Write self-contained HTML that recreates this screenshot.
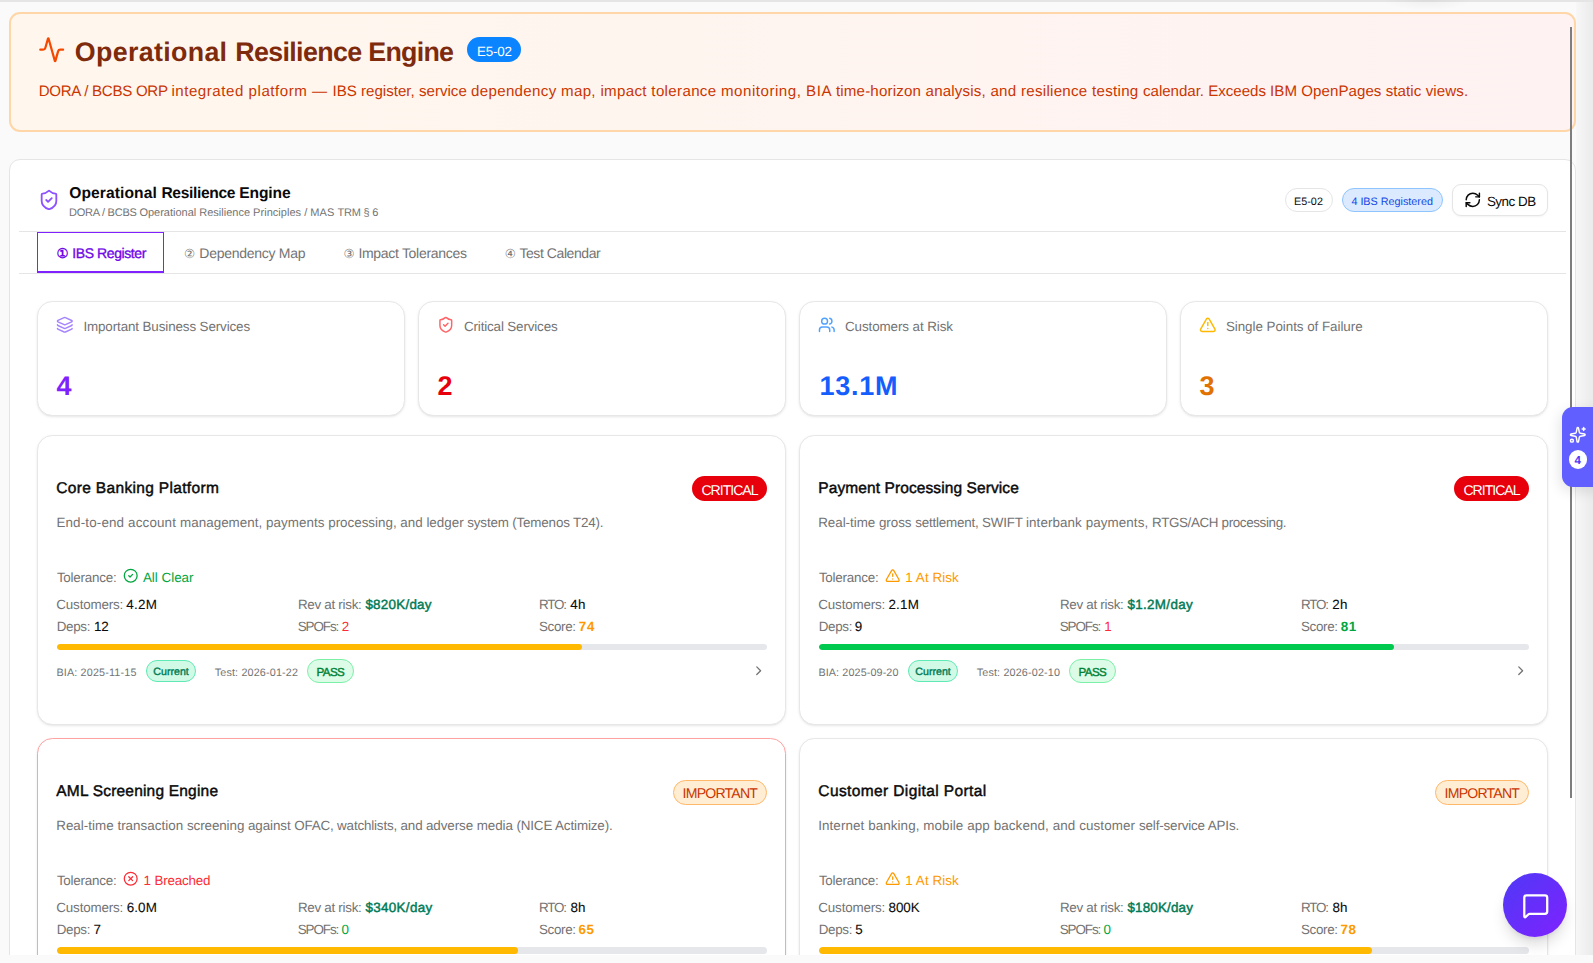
<!DOCTYPE html>
<html lang="en">
<head>
<meta charset="utf-8">
<title>Operational Resilience Engine</title>
<style>
*{box-sizing:border-box;margin:0;padding:0}
html,body{width:1593px;height:963px;overflow:hidden}
body{background:#fafafa;font-family:"Liberation Sans",sans-serif;color:#0a0a0a;position:relative;text-rendering:geometricPrecision}
.abs{position:absolute}
.t{position:absolute;white-space:nowrap;line-height:1}
svg{display:block}
.ic{position:absolute;fill:none;stroke:currentColor;stroke-linecap:round;stroke-linejoin:round;stroke-width:2;overflow:visible}
#topstrip{left:0;top:0;width:1593px;height:2px;background:#e5e5e5;z-index:50}
#viewport{left:0;top:0;width:1593px;height:955px;overflow:hidden;background:#fafafa}
#bottomstrip{left:0;top:955px;width:1593px;height:8px;background:#fafafa}
#banner{left:9px;top:12px;width:1567px;height:120px;border:2px solid #ffd6a8;border-radius:11px;background:linear-gradient(90deg,#fff7ed,#fef2f2)}
#main{left:9px;top:159px;width:1567px;height:900px;border:1px solid #e5e5e5;border-radius:11px;background:#fff}
.hr{position:absolute;height:1px;background:#e5e5e5}
.card{position:absolute;background:#fff;border:1px solid #e7e7e7;border-radius:15.4px;box-shadow:0 1px 3px rgba(0,0,0,.08),0 1px 2px -1px rgba(0,0,0,.08)}
.stat{width:368px;height:115px;top:301px}
.svc{width:749px;height:290px}
.pill{position:absolute;border-radius:999px;border:1px solid transparent}
.track{position:absolute;height:6px;width:710px;border-radius:4px;background:#e5e7eb;overflow:hidden}
.track i{display:block;height:100%;border-radius:4px}
.cn{font-family:"DejaVu Sans","Noto Sans CJK JP",sans-serif}
</style>
</head>
<body>
<div id="topstrip" class="abs"></div>
<div id="viewport" class="abs">
<div id="banner" class="abs"></div>
<svg class="ic" viewBox="0 0 24 24" style="left:37.80px;top:35.80px;width:27.4px;height:27.4px;color:#f54900;stroke-width:1.95"><path d="M22 12h-2.48a2 2 0 0 0-1.93 1.46l-2.35 8.36a.25.25 0 0 1-.48 0L9.24 2.18a.25.25 0 0 0-.48 0l-2.35 8.36A2 2 0 0 1 4.49 12H2"/></svg>
<div class="pill" style="left:467px;top:37px;width:54px;height:25px;background:#0a84ff"></div>
<div id="main" class="abs"></div>
<svg class="ic" viewBox="0 0 24 24" style="left:37.50px;top:189.30px;width:22px;height:22px;color:#8e51ff;stroke-width:2"><path d="M20 13c0 5-3.5 7.5-7.66 8.95a1 1 0 0 1-.67-.01C7.5 20.5 4 18 4 13V6a1 1 0 0 1 1-1c2 0 4.5-1.2 6.24-2.72a1.17 1.17 0 0 1 1.52 0C14.51 3.81 17 5 19 5a1 1 0 0 1 1 1z"/><path d="m9 12 2 2 4-4"/></svg>
<div class="pill" style="left:1285px;top:188px;width:48px;height:24px;border-color:#e5e5e5;background:#fff"></div>
<div class="pill" style="left:1342px;top:188px;width:101px;height:24px;border-color:#8ec5ff;background:#dbeafe"></div>
<div class="abs" style="left:1452px;top:184px;width:96px;height:32px;border:1px solid #e5e5e5;border-radius:9px;background:#fff;box-shadow:0 1px 2px rgba(0,0,0,.05)"></div>
<svg class="ic" viewBox="0 0 24 24" style="left:1464.20px;top:191.00px;width:17.6px;height:17.6px;color:#0a0a0a;stroke-width:2"><path d="M3 12a9 9 0 0 1 9-9 9.75 9.75 0 0 1 6.74 2.74L21 8"/><path d="M21 3v5h-5"/><path d="M21 12a9 9 0 0 1-9 9 9.75 9.75 0 0 1-6.74-2.74L3 16"/><path d="M8 16H3v5"/></svg>
<div class="hr" style="left:19px;top:231px;width:1547px"></div>
<div class="hr" style="left:19px;top:273px;width:1547px"></div>
<div class="abs" style="left:37px;top:232px;width:127px;height:41px;border:1px solid #7f22fe;border-bottom-width:2px;background:#fff"></div>
<div class="card stat" style="left:37px"></div>
<svg class="ic" viewBox="0 0 24 24" style="left:56.20px;top:316.20px;width:17.6px;height:17.6px;color:#a684ff;stroke-width:2"><path d="M12.83 2.18a2 2 0 0 0-1.66 0L2.6 6.08a1 1 0 0 0 0 1.83l8.58 3.91a2 2 0 0 0 1.66 0l8.58-3.9a1 1 0 0 0 0-1.83z"/><path d="M2 12a1 1 0 0 0 .58.91l8.6 3.91a2 2 0 0 0 1.65 0l8.58-3.9A1 1 0 0 0 22 12"/><path d="M2 17a1 1 0 0 0 .58.91l8.6 3.91a2 2 0 0 0 1.65 0l8.58-3.9A1 1 0 0 0 22 17"/></svg>
<div class="card stat" style="left:418px"></div>
<svg class="ic" viewBox="0 0 24 24" style="left:437.20px;top:316.20px;width:17.6px;height:17.6px;color:#ff6467;stroke-width:2"><path d="M20 13c0 5-3.5 7.5-7.66 8.95a1 1 0 0 1-.67-.01C7.5 20.5 4 18 4 13V6a1 1 0 0 1 1-1c2 0 4.5-1.2 6.24-2.72a1.17 1.17 0 0 1 1.52 0C14.51 3.81 17 5 19 5a1 1 0 0 1 1 1z"/><path d="m9 12 2 2 4-4"/></svg>
<div class="card stat" style="left:799px"></div>
<svg class="ic" viewBox="0 0 24 24" style="left:818.20px;top:316.20px;width:17.6px;height:17.6px;color:#51a2ff;stroke-width:2"><path d="M16 21v-2a4 4 0 0 0-4-4H6a4 4 0 0 0-4 4v2"/><circle cx="9" cy="7" r="4"/><path d="M22 21v-2a4 4 0 0 0-3-3.87"/><path d="M16 3.13a4 4 0 0 1 0 7.75"/></svg>
<div class="card stat" style="left:1180px"></div>
<svg class="ic" viewBox="0 0 24 24" style="left:1199.20px;top:316.20px;width:17.6px;height:17.6px;color:#ffb900;stroke-width:2"><path d="m21.73 18-8-14a2 2 0 0 0-3.48 0l-8 14A2 2 0 0 0 4 21h16a2 2 0 0 0 1.73-3"/><path d="M12 9v4"/><path d="M12 17h.01"/></svg>
<div class="card svc" style="left:37px;top:435px"></div>
<svg class="ic" viewBox="0 0 24 24" style="left:123.30px;top:568.30px;width:15.4px;height:15.4px;color:#00a63e;stroke-width:2"><circle cx="12" cy="12" r="10"/><path d="m9 12 2 2 4-4"/></svg>
<div class="track" style="left:56.5px;top:644px;height:6px"><i style="width:74%;background:#ffb900"></i></div>
<div class="pill" style="left:146px;top:660px;width:50px;height:22px;background:#d0fae5;border-color:#5ee9b5"></div>
<div class="pill" style="left:307px;top:659px;width:47px;height:24px;background:#dcfce7;border-color:#7bf1a8"></div>
<svg class="ic" viewBox="0 0 24 24" style="left:751.30px;top:663.30px;width:15.4px;height:15.4px;color:#737373;stroke-width:2"><path d="m9 18 6-6-6-6"/></svg>
<div class="pill" style="left:692px;top:476px;width:75px;height:25px;background:#e7000b"></div>
<div class="card svc" style="left:799px;top:435px"></div>
<svg class="ic" viewBox="0 0 24 24" style="left:885.00px;top:568.20px;width:15.4px;height:15.4px;color:#fe9a00;stroke-width:2"><path d="m21.73 18-8-14a2 2 0 0 0-3.48 0l-8 14A2 2 0 0 0 4 21h16a2 2 0 0 0 1.73-3"/><path d="M12 9v4"/><path d="M12 17h.01"/></svg>
<div class="track" style="left:818.5px;top:644px;height:6px"><i style="width:81%;background:#00c950"></i></div>
<div class="pill" style="left:908px;top:660px;width:50px;height:22px;background:#d0fae5;border-color:#5ee9b5"></div>
<div class="pill" style="left:1069px;top:659px;width:47px;height:24px;background:#dcfce7;border-color:#7bf1a8"></div>
<svg class="ic" viewBox="0 0 24 24" style="left:1513.30px;top:663.30px;width:15.4px;height:15.4px;color:#737373;stroke-width:2"><path d="m9 18 6-6-6-6"/></svg>
<div class="pill" style="left:1454px;top:476px;width:75px;height:25px;background:#e7000b"></div>
<div class="card svc" style="left:37px;top:738px;border-color:#ffa2a2"></div>
<svg class="ic" viewBox="0 0 24 24" style="left:123.30px;top:871.30px;width:15.4px;height:15.4px;color:#fb2c36;stroke-width:2"><circle cx="12" cy="12" r="10"/><path d="m15 9-6 6"/><path d="m9 9 6 6"/></svg>
<div class="track" style="left:56.5px;top:947px;height:7px"><i style="width:65%;background:#ffb900"></i></div>
<div class="pill" style="left:673px;top:780px;width:94px;height:25px;background:#ffedd4;border-color:#ffb86a"></div>
<div class="card svc" style="left:799px;top:738px"></div>
<svg class="ic" viewBox="0 0 24 24" style="left:885.00px;top:871.20px;width:15.4px;height:15.4px;color:#fe9a00;stroke-width:2"><path d="m21.73 18-8-14a2 2 0 0 0-3.48 0l-8 14A2 2 0 0 0 4 21h16a2 2 0 0 0 1.73-3"/><path d="M12 9v4"/><path d="M12 17h.01"/></svg>
<div class="track" style="left:818.5px;top:947px;height:7px"><i style="width:78%;background:#ffb900"></i></div>
<div class="pill" style="left:1435px;top:780px;width:94px;height:25px;background:#ffedd4;border-color:#ffb86a"></div>
<div class="grp" id="g-bt"><span class="t" id="bt0" style="left:74.80px;top:39.00px;font-size:26.8px;color:#7e2a0c;font-weight:700;letter-spacing:0.337px;white-space:pre;">Operational </span><span class="t" id="bt1" style="left:235.20px;top:39.00px;font-size:26.8px;color:#7e2a0c;font-weight:700;letter-spacing:-0.630px;white-space:pre;">Resilience </span><span class="t" id="bt2" style="left:368.30px;top:39.00px;font-size:26.8px;color:#7e2a0c;font-weight:700;letter-spacing:-0.738px;">Engine</span></div>
<div class="t" id="bb" style="left:477.10px;top:45.00px;font-size:13.4px;color:#fff;letter-spacing:-0.247px;">E5-02</div>
<div class="grp" id="g-bs"><span class="t" id="bs0" style="left:38.70px;top:84.00px;font-size:15.1px;color:#ca3500;letter-spacing:-0.286px;white-space:pre;">DORA / BCBS ORP </span><span class="t" id="bs1" style="left:171.40px;top:84.00px;font-size:15.1px;color:#ca3500;letter-spacing:0.534px;white-space:pre;">integrated platform — </span><span class="t" id="bs2" style="left:332.50px;top:84.00px;font-size:15.1px;color:#ca3500;letter-spacing:0.004px;white-space:pre;">IBS register, service </span><span class="t" id="bs3" style="left:471.00px;top:84.00px;font-size:15.1px;color:#ca3500;letter-spacing:0.325px;white-space:pre;">dependency map, </span><span class="t" id="bs4" style="left:600.40px;top:84.00px;font-size:15.1px;color:#ca3500;letter-spacing:0.333px;white-space:pre;">impact tolerance </span><span class="t" id="bs5" style="left:721.00px;top:84.00px;font-size:15.1px;color:#ca3500;letter-spacing:0.521px;white-space:pre;">monitoring, BIA </span><span class="t" id="bs6" style="left:835.90px;top:84.00px;font-size:15.1px;color:#ca3500;letter-spacing:0.188px;white-space:pre;">time-horizon analysis, </span><span class="t" id="bs7" style="left:990.40px;top:84.00px;font-size:15.1px;color:#ca3500;letter-spacing:0.287px;white-space:pre;">and resilience testing </span><span class="t" id="bs8" style="left:1143.00px;top:84.00px;font-size:15.1px;color:#ca3500;letter-spacing:-0.025px;white-space:pre;">calendar. Exceeds </span><span class="t" id="bs9" style="left:1270.10px;top:84.00px;font-size:15.1px;color:#ca3500;letter-spacing:0.046px;white-space:pre;">IBM OpenPages </span><span class="t" id="bs10" style="left:1385.70px;top:84.00px;font-size:15.1px;color:#ca3500;letter-spacing:0.088px;">static views.</span></div>
<div class="grp" id="g-ht"><span class="t" id="ht0" style="left:69.20px;top:186.00px;font-size:15.6px;color:#0a0a0a;font-weight:700;letter-spacing:0.101px;white-space:pre;">Operational </span><span class="t" id="ht1" style="left:161.40px;top:186.00px;font-size:15.6px;color:#0a0a0a;font-weight:700;letter-spacing:-0.335px;white-space:pre;">Resilience </span><span class="t" id="ht2" style="left:239.20px;top:186.00px;font-size:15.6px;color:#0a0a0a;font-weight:700;letter-spacing:-0.097px;">Engine</span></div>
<div class="grp" id="g-hs"><span class="t" id="hs0" style="left:69.00px;top:208.00px;font-size:11px;color:#737373;letter-spacing:-0.247px;white-space:pre;">DORA / BCBS </span><span class="t" id="hs1" style="left:139.40px;top:208.00px;font-size:11px;color:#737373;letter-spacing:-0.001px;white-space:pre;">Operational Resilience </span><span class="t" id="hs2" style="left:253.10px;top:208.00px;font-size:11px;color:#737373;letter-spacing:0.032px;white-space:pre;">Principles / MAS </span><span class="t" id="hs3" style="left:337.40px;top:208.00px;font-size:11px;color:#737373;letter-spacing:-0.198px;">TRM &sect; 6</span></div>
<div class="t" id="hb1" style="left:1293.90px;top:197.00px;font-size:10.8px;color:#0a0a0a;letter-spacing:0.058px;">E5-02</div>
<div class="t" id="hb2" style="left:1351.40px;top:197.00px;font-size:10.8px;color:#1447e6;letter-spacing:-0.008px;">4 IBS Registered</div>
<div class="t" id="hsy" style="left:1486.90px;top:195.00px;font-size:13.4px;color:#0a0a0a;letter-spacing:-0.485px;">Sync DB</div>
<div class="grp" id="g-tab1"><span class="t" id="tc1" style="left:56.40px;top:247.00px;font-size:13.4px;color:#7008e7;font-weight:700;font-family:"DejaVu Sans",sans-serif;white-space:pre;">① </span><span class="t" id="t1" style="left:72.30px;top:246.00px;font-size:14px;color:#7008e7;letter-spacing:-0.416px;-webkit-text-stroke:0.35px #7008e7;">IBS Register</span></div>
<div class="grp" id="g-tab2"><span class="t" id="tc2" style="left:184.10px;top:248.00px;font-size:12.4px;color:#737373;font-family:"Noto Sans CJK JP",sans-serif;white-space:pre;">② </span><span class="t" id="t2" style="left:199.30px;top:246.00px;font-size:14px;color:#737373;letter-spacing:-0.275px;">Dependency Map</span></div>
<div class="grp" id="g-tab3"><span class="t" id="tc3" style="left:343.60px;top:248.00px;font-size:12.4px;color:#737373;font-family:"Noto Sans CJK JP",sans-serif;white-space:pre;">③ </span><span class="t" id="t3" style="left:358.40px;top:246.00px;font-size:14px;color:#737373;letter-spacing:-0.303px;">Impact Tolerances</span></div>
<div class="grp" id="g-tab4"><span class="t" id="tc4" style="left:504.70px;top:248.00px;font-size:12.4px;color:#737373;font-family:"Noto Sans CJK JP",sans-serif;white-space:pre;">④ </span><span class="t" id="t4" style="left:519.40px;top:246.00px;font-size:14px;color:#737373;letter-spacing:-0.422px;">Test Calendar</span></div>
<div class="t" id="s1l" style="left:83.40px;top:320.00px;font-size:13.4px;color:#737373;letter-spacing:-0.114px;">Important Business Services</div>
<div class="t" id="s2l" style="left:464.00px;top:320.00px;font-size:13.4px;color:#737373;letter-spacing:-0.146px;">Critical Services</div>
<div class="t" id="s3l" style="left:845.00px;top:320.00px;font-size:13.4px;color:#737373;letter-spacing:-0.088px;">Customers at Risk</div>
<div class="t" id="s4l" style="left:1225.90px;top:320.00px;font-size:13.4px;color:#737373;letter-spacing:-0.042px;">Single Points of Failure</div>
<div class="t" id="s1n" style="left:56.40px;top:373.00px;font-size:27px;color:#7f22fe;font-weight:700;">4</div>
<div class="t" id="s2n" style="left:437.60px;top:373.00px;font-size:27px;color:#e7000b;font-weight:700;">2</div>
<div class="t" id="s3n" style="left:819.40px;top:373.00px;font-size:27px;color:#155dfc;font-weight:700;letter-spacing:0.771px;">13.1M</div>
<div class="t" id="s4n" style="left:1199.40px;top:373.00px;font-size:27px;color:#e17100;font-weight:700;">3</div>
<div class="t" id="ati" style="left:56.30px;top:481.00px;font-size:15.5px;color:#0a0a0a;letter-spacing:0.332px;-webkit-text-stroke:0.45px #0a0a0a;">Core Banking Platform</div>
<div class="grp" id="g-ade"><span class="t" id="ade0" style="left:56.40px;top:516.00px;font-size:13.4px;color:#737373;letter-spacing:0.157px;white-space:pre;">End-to-end account </span><span class="t" id="ade1" style="left:180.00px;top:516.00px;font-size:13.4px;color:#737373;letter-spacing:0.039px;white-space:pre;">management, payments </span><span class="t" id="ade2" style="left:328.20px;top:516.00px;font-size:13.4px;color:#737373;letter-spacing:-0.004px;white-space:pre;">processing, and ledger </span><span class="t" id="ade3" style="left:467.30px;top:516.00px;font-size:13.4px;color:#737373;letter-spacing:-0.169px;">system (Temenos T24).</span></div>
<div class="t" id="ato" style="left:56.90px;top:571.00px;font-size:13.4px;color:#737373;letter-spacing:-0.218px;">Tolerance:</div>
<div class="t" id="atv" style="left:142.90px;top:571.00px;font-size:13.4px;color:#00a63e;letter-spacing:-0.001px;">All Clear</div>
<div class="t" id="acu" style="left:56.30px;top:598.00px;font-size:13.4px;color:#737373;letter-spacing:-0.157px;">Customers:</div>
<div class="t" id="acv" style="left:126.20px;top:598.00px;font-size:13.4px;color:#0a0a0a;letter-spacing:0.280px;-webkit-text-stroke:0.1px #0a0a0a;">4.2M</div>
<div class="t" id="adp" style="left:56.70px;top:620.00px;font-size:13.4px;color:#737373;letter-spacing:-0.317px;">Deps:</div>
<div class="t" id="adv" style="left:94.00px;top:620.00px;font-size:13.4px;color:#0a0a0a;letter-spacing:-0.153px;-webkit-text-stroke:0.1px #0a0a0a;">12</div>
<div class="t" id="arv" style="left:297.90px;top:598.00px;font-size:13.4px;color:#737373;letter-spacing:-0.281px;">Rev at risk:</div>
<div class="t" id="arvv" style="left:365.40px;top:598.00px;font-size:13.4px;color:#007a55;letter-spacing:0.263px;-webkit-text-stroke:0.45px #007a55;">$820K/day</div>
<div class="t" id="asp" style="left:297.70px;top:620.00px;font-size:13.4px;color:#737373;letter-spacing:-1.046px;">SPOFs:</div>
<div class="t" id="aspv" style="left:341.80px;top:620.00px;font-size:13.4px;color:#fb2c36;">2</div>
<div class="t" id="art" style="left:538.90px;top:598.00px;font-size:13.4px;color:#737373;letter-spacing:-1.104px;">RTO:</div>
<div class="t" id="artv" style="left:570.20px;top:598.00px;font-size:13.4px;color:#0a0a0a;letter-spacing:0.247px;-webkit-text-stroke:0.1px #0a0a0a;">4h</div>
<div class="t" id="asc" style="left:538.90px;top:620.00px;font-size:13.4px;color:#737373;letter-spacing:-0.301px;">Score:</div>
<div class="t" id="ascv" style="left:578.70px;top:620.00px;font-size:13.4px;color:#fe9a00;font-weight:700;letter-spacing:0.897px;">74</div>
<div class="t" id="abi" style="left:56.40px;top:668.00px;font-size:10.8px;color:#737373;letter-spacing:0.157px;">BIA: 2025-11-15</div>
<div class="t" id="acur" style="left:153.30px;top:667.00px;font-size:10.6px;color:#007a55;letter-spacing:0.025px;-webkit-text-stroke:0.4px #007a55;">Current</div>
<div class="t" id="ate" style="left:214.70px;top:668.00px;font-size:10.8px;color:#737373;letter-spacing:0.148px;">Test: 2026-01-22</div>
<div class="t" id="apa" style="left:316.40px;top:667.00px;font-size:11.6px;color:#008236;letter-spacing:-0.545px;-webkit-text-stroke:0.4px #008236;">PASS</div>
<div class="t" id="abg" style="left:701.40px;top:483.00px;font-size:14.1px;color:#fff;letter-spacing:-1.002px;">CRITICAL</div>
<div class="t" id="bti" style="left:818.30px;top:481.00px;font-size:15.5px;color:#0a0a0a;letter-spacing:0.095px;-webkit-text-stroke:0.45px #0a0a0a;">Payment Processing Service</div>
<div class="grp" id="g-bde"><span class="t" id="bde0" style="left:818.20px;top:516.00px;font-size:13.4px;color:#737373;letter-spacing:-0.030px;white-space:pre;">Real-time gross </span><span class="t" id="bde1" style="left:915.20px;top:516.00px;font-size:13.4px;color:#737373;letter-spacing:-0.197px;white-space:pre;">settlement, SWIFT </span><span class="t" id="bde2" style="left:1026.00px;top:516.00px;font-size:13.4px;color:#737373;letter-spacing:0.089px;white-space:pre;">interbank payments, </span><span class="t" id="bde3" style="left:1152.10px;top:516.00px;font-size:13.4px;color:#737373;letter-spacing:-0.358px;">RTGS/ACH processing.</span></div>
<div class="t" id="bto" style="left:818.90px;top:571.00px;font-size:13.4px;color:#737373;letter-spacing:-0.218px;">Tolerance:</div>
<div class="t" id="btv" style="left:905.30px;top:571.00px;font-size:13.4px;color:#fe9a00;letter-spacing:0.073px;">1 At Risk</div>
<div class="t" id="bcu" style="left:818.30px;top:598.00px;font-size:13.4px;color:#737373;letter-spacing:-0.157px;">Customers:</div>
<div class="t" id="bcv" style="left:888.40px;top:598.00px;font-size:13.4px;color:#0a0a0a;letter-spacing:0.280px;-webkit-text-stroke:0.1px #0a0a0a;">2.1M</div>
<div class="t" id="bdp" style="left:818.70px;top:620.00px;font-size:13.4px;color:#737373;letter-spacing:-0.317px;">Deps:</div>
<div class="t" id="bdv" style="left:854.80px;top:620.00px;font-size:13.4px;color:#0a0a0a;-webkit-text-stroke:0.1px #0a0a0a;">9</div>
<div class="t" id="brv" style="left:1059.90px;top:598.00px;font-size:13.4px;color:#737373;letter-spacing:-0.281px;">Rev at risk:</div>
<div class="t" id="brvv" style="left:1127.40px;top:598.00px;font-size:13.4px;color:#007a55;letter-spacing:0.352px;-webkit-text-stroke:0.45px #007a55;">$1.2M/day</div>
<div class="t" id="bsp" style="left:1059.70px;top:620.00px;font-size:13.4px;color:#737373;letter-spacing:-1.046px;">SPOFs:</div>
<div class="t" id="bspv" style="left:1104.20px;top:620.00px;font-size:13.4px;color:#fb2c36;">1</div>
<div class="t" id="brt" style="left:1300.90px;top:598.00px;font-size:13.4px;color:#737373;letter-spacing:-1.104px;">RTO:</div>
<div class="t" id="brtv" style="left:1332.20px;top:598.00px;font-size:13.4px;color:#0a0a0a;letter-spacing:0.247px;-webkit-text-stroke:0.1px #0a0a0a;">2h</div>
<div class="t" id="bsc" style="left:1300.90px;top:620.00px;font-size:13.4px;color:#737373;letter-spacing:-0.301px;">Score:</div>
<div class="t" id="bscv" style="left:1340.70px;top:620.00px;font-size:13.4px;color:#00a63e;font-weight:700;letter-spacing:0.647px;">81</div>
<div class="t" id="bbi" style="left:818.40px;top:668.00px;font-size:10.8px;color:#737373;letter-spacing:0.104px;">BIA: 2025-09-20</div>
<div class="t" id="bcur" style="left:915.30px;top:667.00px;font-size:10.6px;color:#007a55;letter-spacing:0.025px;-webkit-text-stroke:0.4px #007a55;">Current</div>
<div class="t" id="bte" style="left:976.70px;top:668.00px;font-size:10.8px;color:#737373;letter-spacing:0.148px;">Test: 2026-02-10</div>
<div class="t" id="bpa" style="left:1078.40px;top:667.00px;font-size:11.6px;color:#008236;letter-spacing:-0.545px;-webkit-text-stroke:0.4px #008236;">PASS</div>
<div class="t" id="bbg" style="left:1463.40px;top:483.00px;font-size:14.1px;color:#fff;letter-spacing:-1.002px;">CRITICAL</div>
<div class="t" id="cti" style="left:56.30px;top:784.00px;font-size:15.5px;color:#0a0a0a;letter-spacing:0.197px;-webkit-text-stroke:0.45px #0a0a0a;">AML Screening Engine</div>
<div class="grp" id="g-cde"><span class="t" id="cde0" style="left:56.20px;top:819.00px;font-size:13.4px;color:#737373;letter-spacing:0.020px;white-space:pre;">Real-time transaction </span><span class="t" id="cde1" style="left:186.90px;top:819.00px;font-size:13.4px;color:#737373;letter-spacing:-0.077px;white-space:pre;">screening against </span><span class="t" id="cde2" style="left:294.20px;top:819.00px;font-size:13.4px;color:#737373;letter-spacing:-0.166px;white-space:pre;">OFAC, watchlists, and </span><span class="t" id="cde3" style="left:426.00px;top:819.00px;font-size:13.4px;color:#737373;letter-spacing:-0.083px;white-space:pre;">adverse media </span><span class="t" id="cde4" style="left:516.40px;top:819.00px;font-size:13.4px;color:#737373;letter-spacing:-0.126px;">(NICE Actimize).</span></div>
<div class="t" id="cto" style="left:56.90px;top:874.00px;font-size:13.4px;color:#737373;letter-spacing:-0.218px;">Tolerance:</div>
<div class="t" id="ctv" style="left:143.60px;top:874.00px;font-size:13.4px;color:#fb2c36;letter-spacing:-0.170px;">1 Breached</div>
<div class="t" id="ccu" style="left:56.30px;top:901.00px;font-size:13.4px;color:#737373;letter-spacing:-0.157px;">Customers:</div>
<div class="t" id="ccv" style="left:126.80px;top:901.00px;font-size:13.4px;color:#0a0a0a;letter-spacing:0.080px;-webkit-text-stroke:0.1px #0a0a0a;">6.0M</div>
<div class="t" id="cdp" style="left:56.70px;top:923.00px;font-size:13.4px;color:#737373;letter-spacing:-0.317px;">Deps:</div>
<div class="t" id="cdv" style="left:93.40px;top:923.00px;font-size:13.4px;color:#0a0a0a;-webkit-text-stroke:0.1px #0a0a0a;">7</div>
<div class="t" id="crv" style="left:297.90px;top:901.00px;font-size:13.4px;color:#737373;letter-spacing:-0.281px;">Rev at risk:</div>
<div class="t" id="crvv" style="left:365.40px;top:901.00px;font-size:13.4px;color:#007a55;letter-spacing:0.352px;-webkit-text-stroke:0.45px #007a55;">$340K/day</div>
<div class="t" id="csp" style="left:297.70px;top:923.00px;font-size:13.4px;color:#737373;letter-spacing:-1.046px;">SPOFs:</div>
<div class="t" id="cspv" style="left:341.60px;top:923.00px;font-size:13.4px;color:#00a63e;">0</div>
<div class="t" id="crt" style="left:538.90px;top:901.00px;font-size:13.4px;color:#737373;letter-spacing:-1.104px;">RTO:</div>
<div class="t" id="crtv" style="left:570.50px;top:901.00px;font-size:13.4px;color:#0a0a0a;letter-spacing:0.097px;-webkit-text-stroke:0.1px #0a0a0a;">8h</div>
<div class="t" id="csc" style="left:538.90px;top:923.00px;font-size:13.4px;color:#737373;letter-spacing:-0.301px;">Score:</div>
<div class="t" id="cscv" style="left:578.40px;top:923.00px;font-size:13.4px;color:#fe9a00;font-weight:700;letter-spacing:0.747px;">65</div>
<div class="t" id="cbg" style="left:682.60px;top:786.00px;font-size:14.1px;color:#ca3500;letter-spacing:-0.789px;">IMPORTANT</div>
<div class="t" id="dti" style="left:818.30px;top:784.00px;font-size:15.5px;color:#0a0a0a;letter-spacing:0.389px;-webkit-text-stroke:0.45px #0a0a0a;">Customer Digital Portal</div>
<div class="grp" id="g-dde"><span class="t" id="dde0" style="left:818.20px;top:819.00px;font-size:13.4px;color:#737373;letter-spacing:0.090px;white-space:pre;">Internet banking, </span><span class="t" id="dde1" style="left:923.30px;top:819.00px;font-size:13.4px;color:#737373;letter-spacing:0.105px;white-space:pre;">mobile app backend, </span><span class="t" id="dde2" style="left:1052.70px;top:819.00px;font-size:13.4px;color:#737373;letter-spacing:0.111px;white-space:pre;">and customer </span><span class="t" id="dde3" style="left:1139.00px;top:819.00px;font-size:13.4px;color:#737373;letter-spacing:-0.150px;">self-service APIs.</span></div>
<div class="t" id="dto" style="left:818.90px;top:874.00px;font-size:13.4px;color:#737373;letter-spacing:-0.218px;">Tolerance:</div>
<div class="t" id="dtv" style="left:905.30px;top:874.00px;font-size:13.4px;color:#fe9a00;letter-spacing:0.073px;">1 At Risk</div>
<div class="t" id="dcu" style="left:818.30px;top:901.00px;font-size:13.4px;color:#737373;letter-spacing:-0.157px;">Customers:</div>
<div class="t" id="dcv" style="left:888.60px;top:901.00px;font-size:13.4px;color:#0a0a0a;letter-spacing:-0.095px;-webkit-text-stroke:0.1px #0a0a0a;">800K</div>
<div class="t" id="ddp" style="left:818.70px;top:923.00px;font-size:13.4px;color:#737373;letter-spacing:-0.317px;">Deps:</div>
<div class="t" id="ddv" style="left:855.20px;top:923.00px;font-size:13.4px;color:#0a0a0a;-webkit-text-stroke:0.1px #0a0a0a;">5</div>
<div class="t" id="drv" style="left:1059.90px;top:901.00px;font-size:13.4px;color:#737373;letter-spacing:-0.281px;">Rev at risk:</div>
<div class="t" id="drvv" style="left:1127.40px;top:901.00px;font-size:13.4px;color:#007a55;letter-spacing:0.185px;-webkit-text-stroke:0.45px #007a55;">$180K/day</div>
<div class="t" id="dsp" style="left:1059.70px;top:923.00px;font-size:13.4px;color:#737373;letter-spacing:-1.046px;">SPOFs:</div>
<div class="t" id="dspv" style="left:1103.60px;top:923.00px;font-size:13.4px;color:#00a63e;">0</div>
<div class="t" id="drt" style="left:1300.90px;top:901.00px;font-size:13.4px;color:#737373;letter-spacing:-1.104px;">RTO:</div>
<div class="t" id="drtv" style="left:1332.50px;top:901.00px;font-size:13.4px;color:#0a0a0a;letter-spacing:0.097px;-webkit-text-stroke:0.1px #0a0a0a;">8h</div>
<div class="t" id="dsc" style="left:1300.90px;top:923.00px;font-size:13.4px;color:#737373;letter-spacing:-0.301px;">Score:</div>
<div class="t" id="dscv" style="left:1340.40px;top:923.00px;font-size:13.4px;color:#fe9a00;font-weight:700;letter-spacing:0.747px;">78</div>
<div class="t" id="dbg" style="left:1444.60px;top:786.00px;font-size:14.1px;color:#ca3500;letter-spacing:-0.789px;">IMPORTANT</div>
</div>
<div id="bottomstrip" class="abs"></div>
<div class="abs" style="left:1382px;top:0;width:90px;height:11px;background:radial-gradient(ellipse at 50% 0,rgba(0,0,0,.045),rgba(0,0,0,0) 70%);z-index:60"></div>
<div class="abs" style="left:1576px;top:2px;width:17px;height:953px;background:linear-gradient(90deg,rgba(0,0,0,.012),rgba(0,0,0,.062));pointer-events:none"></div>
<div class="abs" style="left:1570px;top:27px;width:2px;height:771px;background:#7e7e7e"></div>
<div class="abs" style="left:1562px;top:406.5px;width:40px;height:80px;border-radius:11px 0 0 11px;background:#615fff;box-shadow:-2px 4px 14px rgba(0,0,0,.11)"></div>
<svg class="ic" viewBox="0 0 24 24" style="left:1568.70px;top:425.90px;width:17.6px;height:17.6px;color:#fff;stroke-width:2"><path d="M11.017 2.814a1 1 0 0 1 1.966 0l1.051 5.558a2 2 0 0 0 1.594 1.594l5.558 1.051a1 1 0 0 1 0 1.966l-5.558 1.051a2 2 0 0 0-1.594 1.594l-1.051 5.558a1 1 0 0 1-1.966 0l-1.051-5.558a2 2 0 0 0-1.594-1.594l-5.558-1.051a1 1 0 0 1 0-1.966l5.558-1.051a2 2 0 0 0 1.594-1.594z"/><path d="M20 2v4"/><path d="M22 4h-4"/><circle cx="4" cy="20" r="2"/></svg>
<div class="abs" style="left:1568.7px;top:450.2px;width:18.7px;height:18.7px;border-radius:50%;background:#fff"></div>
<div class="t" style="left:1574.5px;top:456px;font-size:11.5px;font-weight:700;color:#4f39f6">4</div>
<div class="abs" style="left:1503px;top:873px;width:64px;height:64px;border-radius:50%;background:linear-gradient(135deg,#4f39f6,#7f22fe);box-shadow:0 10px 15px -3px rgba(0,0,0,.15),0 4px 6px -4px rgba(0,0,0,.12)"></div>
<svg class="ic" viewBox="0 0 24 24" style="left:1521.65px;top:891.70px;width:27.5px;height:27.5px;color:#fff;stroke-width:2"><path d="M22 17a2 2 0 0 1-2 2H6.828a2 2 0 0 0-1.414.586l-2.202 2.202A.71.71 0 0 1 2 21.286V5a2 2 0 0 1 2-2h16a2 2 0 0 1 2 2z"/></svg>
</body>
</html>
